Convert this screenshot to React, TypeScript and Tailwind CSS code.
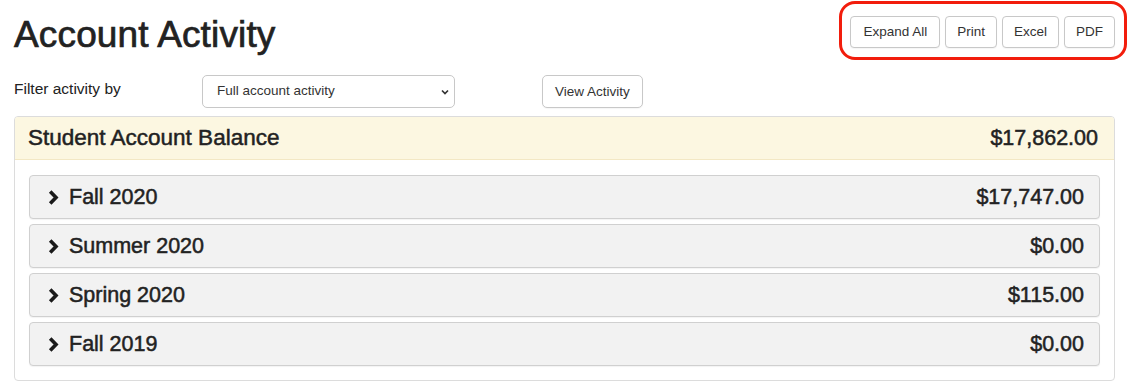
import React from "react";

const terms = [
  { name: "Fall 2020", amount: "$17,747.00" },
  { name: "Summer 2020", amount: "$0.00" },
  { name: "Spring 2020", amount: "$115.00" },
  { name: "Fall 2019", amount: "$0.00" },
];

function Chevron() {
  return (
    <svg width="11" height="15" viewBox="0 0 11 15" className="shrink-0">
      <polyline
        points="2.2,1.6 8,7.5 2.2,13.4"
        fill="none"
        stroke="#1a1a1a"
        strokeWidth="3.6"
        strokeLinejoin="miter"
      />
    </svg>
  );
}

function Btn({ children, className = "" }: { children: React.ReactNode; className?: string }) {
  return (
    <button
      className={
        "border border-[#c8c8c8] bg-white text-[13.5px] text-[#333] leading-none shadow-[0_1px_1px_rgba(0,0,0,0.04)] " +
        className
      }
    >
      {children}
    </button>
  );
}

export default function App() {
  return (
    <div className="relative w-[1130px] h-[386px] bg-white font-['Liberation_Sans',Arial,sans-serif] text-[#333] pl-[14px] pr-[15px] overflow-hidden">
      <div className="flex justify-between items-start">
        <h1 className="mt-[13px] text-[37px] leading-[44px] text-[#222] tracking-[0.15px] [-webkit-text-stroke:0.7px_#222]">
          Account Activity
        </h1>
        <div className="mt-[16px] flex gap-[5px]">
          <Btn className="h-[32px] rounded-[4px] px-[12px]">Expand All</Btn>
          <Btn className="h-[32px] rounded-[4px] px-[11px]">Print</Btn>
          <Btn className="h-[32px] rounded-[4px] px-[11px]">Excel</Btn>
          <Btn className="h-[32px] rounded-[4px] px-[11px]">PDF</Btn>
        </div>
      </div>

      <div className="mt-[18px] flex items-start">
        <div className="w-[188px] mt-[4px] text-[15.5px] leading-[20px] text-[#222]">Filter activity by</div>
        <div className="w-[253px] h-[33px] border border-[#c8c8c8] rounded-[5px] bg-white flex items-center justify-between pl-[14px] pr-[5px] text-[13.5px] text-[#333]">
          <span>Full account activity</span>
          <svg width="8" height="6" viewBox="0 0 8 6">
            <polyline points="1,1.5 4,4.5 7,1.5" fill="none" stroke="#333" strokeWidth="1.7" />
          </svg>
        </div>
        <Btn className="ml-[87px] h-[33px] px-[12px] rounded-[5px]">View Activity</Btn>
      </div>

      <div className="mt-[8px] border border-[#dcdcdc] rounded-[4px] overflow-hidden">
        <div className="h-[43px] bg-[#fcf7e1] border-b border-[#f3e8c4] flex items-center justify-between pl-[13px] pr-[16px] text-[22.5px] leading-[24px] text-[#222] [-webkit-text-stroke:0.5px_#222]">
          <span>Student Account Balance</span>
          <span className="text-[21.5px]">$17,862.00</span>
        </div>
        <div className="pt-[15px] pb-[14px] px-[14px] flex flex-col gap-[5px]">
          {terms.map((t) => (
            <div
              key={t.name}
              className="h-[44px] bg-[#f2f2f2] border border-[#d0d0d0] rounded-[4px] flex items-center justify-between pl-[18px] pr-[15px] text-[21.5px] leading-[24px] text-[#222] shadow-[0_1px_1px_rgba(0,0,0,0.05)]"
            >
              <div className="flex items-center gap-[10px]">
                <Chevron />
                <span className="[-webkit-text-stroke:0.5px_#222]">{t.name}</span>
              </div>
              <span className="[-webkit-text-stroke:0.5px_#222]">{t.amount}</span>
            </div>
          ))}
        </div>
      </div>

      <div className="absolute left-[839px] top-[1px] w-[288px] h-[59px] border-[3px] border-[#f21d0c] rounded-[16px] pointer-events-none" />
    </div>
  );
}
